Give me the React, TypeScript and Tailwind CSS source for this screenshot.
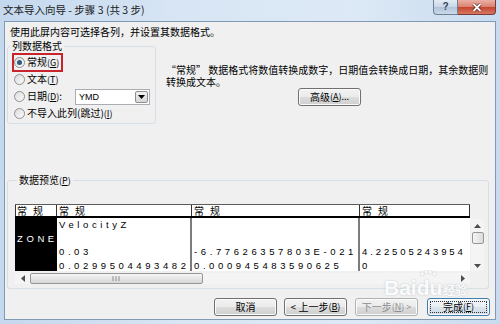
import React from "react";

const U = ({ c }: { c: string }) => (
  <span className="underline underline-offset-1">{c}</span>
);

const Radio = ({ on }: { on?: boolean }) => (
  <span className="w-[11px] h-[11px] shrink-0 rounded-full border border-[#8e8f8f] bg-linear-to-br from-[#dcdcdc] to-[#fbfbfb] flex items-center justify-center">
    {on && <span className="w-[5px] h-[5px] rounded-full bg-[#2f5b82]" />}
  </span>
);

const Btn = ({
  children,
  className = "",
}: {
  children: React.ReactNode;
  className?: string;
}) => (
  <div
    className={
      "h-[18px] w-[63px] shrink-0 rounded-[3px] border border-[#707070] bg-[linear-gradient(#f2f2f2_0%,#ebebeb_50%,#dddddd_50%,#cfcfcf_100%)] shadow-[inset_0_0_0_1px_#fbfbfb] flex items-center justify-center text-[10px] leading-[12px] " +
      className
    }
  >
    {children}
  </div>
);

const Tri = ({ dir }: { dir: "up" | "down" | "left" | "right" }) => {
  const pts = {
    up: "0,4 3.5,0 7,4",
    down: "0,0 3.5,4 7,0",
    left: "4,0 0,3.5 4,7",
    right: "0,0 4,3.5 0,7",
  }[dir];
  const w = dir === "up" || dir === "down" ? 7 : 4;
  const h = dir === "up" || dir === "down" ? 4 : 7;
  return (
    <svg width={w} height={h} viewBox={`0 0 ${w} ${h}`}>
      <polygon points={pts} fill="#4d4d4d" />
    </svg>
  );
};

const cell =
  "h-[13.5px] leading-[13.5px] pl-[2px] whitespace-nowrap overflow-hidden text-[9.5px] tracking-[3.6px] font-['Liberation_Sans',sans-serif]";
const cellNarrow =
  "h-[13.5px] leading-[13.5px] pl-[2px] whitespace-nowrap overflow-hidden text-[9.5px] tracking-[2.9px] font-['Liberation_Sans',sans-serif]";

export default function App() {
  return (
    <div className="w-[500px] h-[324px] relative overflow-hidden flex flex-col bg-[linear-gradient(90deg,#c4d8ee,#d7e5f4_35%,#dde9f6_70%,#c8dbef)] font-['Noto_Sans_CJK_SC',sans-serif] text-black">
      {/* title bar */}
      <div className="h-[21px] shrink-0 flex items-start">
        <div className="pl-[3px] pt-[3px] text-[10.5px] leading-[14px] text-[#1b1b1b]">
          文本导入向导 - 步骤 3 (共 3 步)
        </div>
        <div className="ml-auto mr-[4px] flex">
          <div className="w-[25px] h-[15px] rounded-bl-[4px] border border-t-0 border-[#6f7f96] bg-[linear-gradient(#e3ebf4,#c8d6e6_50%,#b0c3da_50%,#cbd9e9)] flex items-center justify-center text-[10px] font-bold leading-[10px] text-[#34465f] font-['Liberation_Sans',sans-serif]">
            ?
          </div>
          <div className="w-[38px] h-[15px] rounded-br-[4px] border border-t-0 border-l-0 border-[#7a3a36] bg-[linear-gradient(#eab0a6,#d98170_50%,#c4432f_50%,#d7785f)] flex items-center justify-center">
            <svg width="10" height="9" viewBox="0 0 10 9">
              <path d="M1.5 1 L8.5 8 M8.5 1 L1.5 8" stroke="#5a1d18" strokeWidth="3.2" />
              <path d="M1.5 1 L8.5 8 M8.5 1 L1.5 8" stroke="#ffffff" strokeWidth="1.8" />
            </svg>
          </div>
        </div>
      </div>

      {/* client */}
      <div className="flex-1 mx-[4px] mb-[4px] border border-[#8298b3] bg-[#f0f0f0] flex flex-col">
        <div className="mt-[4px] ml-[5px] text-[10px] leading-[12px]">
          使用此屏内容可选择各列，并设置其数据格式。
        </div>

        <div className="mt-[2px] flex">
          <fieldset className="ml-[2px] w-[149px] border border-[#d5dfe5] rounded-[3px] pb-[1px]">
            <legend className="ml-[2px] px-[2px] text-[10px] leading-[12px]">列数据格式</legend>
            <div className="pt-[2px] pl-[6px] flex flex-col text-[10px] leading-[12px]">
              <div className="h-[17px] flex items-center">
                <span className="h-[15px] flex items-center gap-[2px] pr-[2px] shadow-[0_0_0_2px_#c9242b]">
                  <Radio on />
                  <span>
                    常规<span className="text-[9px]">(<U c="G" />)</span>
                  </span>
                </span>
              </div>
              <div className="h-[17px] flex items-center gap-[2px]">
                <Radio />
                <span>
                  文本<span className="text-[9px]">(<U c="T" />)</span>
                </span>
              </div>
              <div className="h-[17px] flex items-center gap-[2px]">
                <Radio />
                <span className="w-[46px]">
                  日期<span className="text-[9px]">(<U c="D" />)</span>:
                </span>
                <div className="w-[75px] h-[16px] bg-white border border-[#abadb3] flex items-center">
                  <span className="pl-[3px] text-[9px] font-['Liberation_Sans',sans-serif]">YMD</span>
                  <span className="ml-auto mr-[1px] w-[13px] h-[12px] rounded-[2px] border border-[#8f8f8f] bg-[linear-gradient(#f2f2f2,#d6d6d6)] flex items-center justify-center">
                    <svg width="7" height="4" viewBox="0 0 7 4">
                      <polygon points="0,0 3.5,4 7,0" fill="#000" />
                    </svg>
                  </span>
                </div>
              </div>
              <div className="h-[17px] flex items-center gap-[2px]">
                <Radio />
                <span>
                  不导入此列(跳过)<span className="text-[9px]">(<U c="I" />)</span>
                </span>
              </div>
            </div>
          </fieldset>

          <div className="ml-[10px] pt-[24px] flex flex-col">
            <div className="text-[10px] leading-[12px] whitespace-nowrap">
              <div>“常规” 数据格式将数值转换成数字，日期值会转换成日期，其余数据则</div>
              <div>转换成文本。</div>
            </div>
            <Btn className="ml-[132px] w-[61px]">
              高级<span className="text-[9px]">(<U c="A" />)...</span>
            </Btn>
          </div>
        </div>

        {/* preview */}
        <fieldset className="mt-[50px] ml-[2px] w-[482px] border border-[#d5dfe5] rounded-[3px] pl-[7px] pb-[4px]">
          <legend className="ml-[2px] px-[2px] text-[10px] leading-[12px]">
            数据预览<span className="text-[9px]">(<U c="P" />)</span>
          </legend>
          <div className="pt-[17px] flex">
            <div className="w-[455px] h-[67px] bg-white overflow-hidden flex flex-col">
              <div className="h-[14px] flex border-t border-[#5c5c5c] border-b-2 border-b-black text-[10px] leading-[11px] tracking-[6px]">
                <div className="w-[42px] border-l border-[#333] border-r border-r-[#333] pl-[1px]">常规</div>
                <div className="w-[135px] border-r border-[#333] pl-[2px]">常规</div>
                <div className="w-[168px] border-r border-[#333] pl-[2px]">常规</div>
                <div className="w-[110px] border-r border-[#333] pl-[2px]">常规</div>
              </div>
              <div className="flex flex-1 overflow-hidden">
                <div className="w-[42px] bg-black text-white">
                  <div className={cell} />
                  <div className={cell}>ZONE</div>
                </div>
                <div className="w-[135px] border-r-2 border-[#7c7c7c]">
                  <div className={cell}>VelocityZ</div>
                  <div className={cell} />
                  <div className={cell}>0.03</div>
                  <div className={cell}>0.0299504493482</div>
                </div>
                <div className="w-[168px] border-r-2 border-[#7c7c7c]">
                  <div className={cell} />
                  <div className={cell} />
                  <div className={cell}>-6.77626357803E-021</div>
                  <div className={cell}>0.000945483590625</div>
                </div>
                <div className="w-[110px]">
                  <div className={cellNarrow} />
                  <div className={cellNarrow} />
                  <div className={cellNarrow}>4.22505243954</div>
                  <div className={cellNarrow}>0</div>
                </div>
              </div>
            </div>
            {/* vertical scrollbar */}
            <div className="ml-[1px] mt-[15px] w-[13px] h-[52px] bg-[#f4f4f4] flex flex-col items-center">
              <div className="h-[13px] flex items-center justify-center">
                <Tri dir="up" />
              </div>
              <div className="w-[12px] h-[12px] rounded-[2px] border border-[#979797] bg-[linear-gradient(90deg,#f4f4f4,#dcdcdc)]" />
              <div className="mt-auto h-[11px] flex items-center justify-center">
                <Tri dir="down" />
              </div>
            </div>
          </div>
          {/* horizontal scrollbar */}
          <div className="mt-[2px] w-[455px] h-[11px] bg-[#f4f4f4] flex items-center">
            <div className="w-[15px] flex justify-center">
              <Tri dir="left" />
            </div>
            <div className="w-[173px] h-[11px] rounded-[2px] border border-[#979797] bg-[linear-gradient(#f6f6f6,#e6e6e6_50%,#d6d6d6)] flex items-center justify-center">
              <span className="text-[7px] leading-[7px] tracking-[1px] text-[#6a6a6a] font-['Liberation_Sans',sans-serif]">III</span>
            </div>
            <div className="ml-auto mr-[5px] flex">
              <Tri dir="right" />
            </div>
          </div>
        </fieldset>

        {/* buttons */}
        <div className="mt-[9px] pr-[5px] flex justify-end">
          <Btn>取消</Btn>
          <Btn className="ml-[7px]">
            &lt; 上一步<span className="text-[9px]">(<U c="B" />)</span>
          </Btn>
          <Btn className="ml-[8px] !border-[#adb2b5] !bg-[#f4f4f4] text-[#8d8d8d]">
            下一步<span className="text-[9px]">(<U c="N" />) &gt;</span>
          </Btn>
          <Btn className="ml-[9px] !border-[#3c7fb1] !bg-[linear-gradient(#f4f8fb,#e8eef4_50%,#dce4ec_50%,#d2dde8)] p-[2px]">
            <span className="w-full h-full border border-dotted border-[#333] flex items-center justify-center">
              完成<span className="text-[9px]">(<U c="F" />)</span>
            </span>
          </Btn>
        </div>
      </div>

      {/* watermark */}
      <div className="absolute left-[384px] top-[278px] flex items-end pointer-events-none opacity-75">
        <span className="text-[21px] leading-[19px] font-bold text-white font-['Liberation_Sans',sans-serif] [text-shadow:0_0_2px_#a9b3bd]">
          Bai
        </span>
        <span className="relative text-[21px] leading-[19px] font-bold text-white font-['Liberation_Sans',sans-serif] [text-shadow:0_0_2px_#a9b3bd]">
          du
          <svg className="absolute left-[1px] -top-[8px]" width="20" height="12" viewBox="0 0 24 15">
            <g fill="#ffffff" stroke="#b7c0c8" strokeWidth="0.6">
              <ellipse cx="5" cy="5" rx="2.3" ry="2.7" />
              <ellipse cx="10" cy="2.5" rx="2.3" ry="2.5" />
              <ellipse cx="15" cy="2.5" rx="2.3" ry="2.5" />
              <ellipse cx="20" cy="5" rx="2.3" ry="2.7" />
            </g>
          </svg>
        </span>
        <span className="ml-[1px] mb-[1px] text-[12px] leading-[13px] font-bold text-white [text-shadow:0_0_2px_#a9b3bd]">
          经验
        </span>
      </div>
    </div>
  );
}
